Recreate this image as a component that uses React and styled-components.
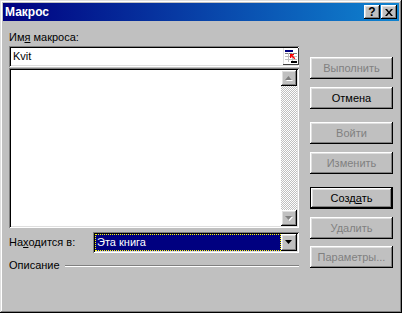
import React from 'react'
import styled, { createGlobalStyle, css } from 'styled-components'

const GlobalStyle = createGlobalStyle`
  html, body {
    margin: 0;
    padding: 0;
    background: #c0c0c0;
  }
  body {
    font-family: "Liberation Sans", Arial, sans-serif;
    font-size: 11px;
    color: #000;
  }
`

const raised = css`
  background: #c0c0c0;
  box-shadow: inset -1px -1px #000, inset 1px 1px #fff, inset -2px -2px #808080, inset 2px 2px #dfdfdf;
`

const sunken = css`
  box-shadow: inset 1px 1px #808080, inset -1px -1px #fff, inset 2px 2px #000, inset -2px -2px #dfdfdf;
`

const Window = styled.div`
  width: 402px;
  height: 313px;
  box-sizing: border-box;
  padding: 3px;
  background: #c0c0c0;
  box-shadow: inset -1px -1px #000, inset 1px 1px #dfdfdf, inset -2px -2px #808080, inset 2px 2px #fff;
  display: flex;
  flex-direction: column;
`

const TitleBar = styled.div`
  height: 18px;
  display: flex;
  align-items: center;
  padding: 0 2px 0 2px;
  background: linear-gradient(90deg, #000080, #1084d0);
`

const Title = styled.div`
  flex: 1;
  color: #fff;
  font-weight: bold;
  font-size: 12px;
  line-height: 18px;
`

const TitleButton = styled.div`
  ${raised};
  width: 16px;
  height: 14px;
  margin-left: ${(p) => p.$gap || 0}px;
  display: flex;
  align-items: center;
  justify-content: center;
  font-weight: bold;
  font-size: 12px;
  line-height: 14px;
`

const Body = styled.div`
  display: flex;
  gap: 11px;
  padding: 10px 0 0 6px;
`

const LeftCol = styled.div`
  width: 290px;
  display: flex;
  flex-direction: column;
`

const RightCol = styled.div`
  width: 83px;
  padding-top: 26px;
  display: flex;
  flex-direction: column;
`

const Label = styled.div`
  height: 13px;
  line-height: 13px;
  margin-bottom: 2px;
  white-space: nowrap;
  width: ${(p) => (p.$width ? `${p.$width}px` : 'auto')};
  flex-shrink: 0;
`

const TextField = styled.div`
  ${sunken};
  height: 21px;
  box-sizing: border-box;
  background: #fff;
  padding: 2px 2px 2px 4px;
  display: flex;
  align-items: center;
  margin-bottom: 1px;
`

const FieldText = styled.span`
  flex: 1;
  line-height: 17px;
`

const ListBox = styled.div`
  ${sunken};
  height: 160px;
  box-sizing: border-box;
  background: #fff;
  padding: 2px;
  display: flex;
  justify-content: flex-end;
`

const ScrollBar = styled.div`
  width: 16px;
  display: flex;
  flex-direction: column;
`

const ArrowButton = styled.div`
  ${raised};
  width: 16px;
  height: ${(p) => p.$h || 16}px;
  flex-shrink: 0;
  display: flex;
  align-items: center;
  justify-content: center;
`

const Track = styled.div`
  flex: 1;
  background-image: conic-gradient(#fff 25%, #c0c0c0 0 50%, #fff 0 75%, #c0c0c0 0);
  background-size: 2px 2px;
`

const ComboRow = styled.div`
  display: flex;
  align-items: center;
  margin-top: 4px;

  & > ${Label} {
    margin-bottom: 0;
  }
`

const Combo = styled.div`
  ${sunken};
  width: 206px;
  height: 21px;
  box-sizing: border-box;
  background: #fff;
  padding: 2px;
  display: flex;
`

const Selected = styled.div`
  flex: 1;
  background: #000080;
  color: #fff;
  padding-left: 2px;
  line-height: 17px;
  outline: 1px dotted #ffff00;
  outline-offset: -1px;
`

const GroupRow = styled.div`
  display: flex;
  align-items: center;
  gap: 5px;
  margin-top: 6px;
  height: 13px;
  line-height: 13px;
`

const Etched = styled.div`
  flex: 1;
  height: 0;
  border-top: 1px solid #808080;
  border-bottom: 1px solid #fff;
`

const Button = styled.div`
  ${raised};
  height: 22px;
  flex-shrink: 0;
  margin-bottom: ${(p) => p.$gap || 0}px;
  display: flex;
  align-items: center;
  justify-content: center;
  color: ${(p) => (p.$disabled ? '#808080' : '#000')};
  ${(p) =>
    p.$default &&
    css`
      box-shadow: inset 0 0 0 1px #000, inset -2px -2px #000, inset 2px 2px #fff, inset -3px -3px #808080,
        inset 3px 3px #dfdfdf;
    `}
`

const CloseIcon = () => (
  <svg width="8" height="7" viewBox="0 0 8 7">
    <path d="M0 0h2l2 2.5L6 0h2L5 3.5 8 7H6L4 4.5 2 7H0l3-3.5z" fill="#000" />
  </svg>
)

const Arrow = ({ up, disabled }) => {
  const pts = up ? '0,4 3.5,0 7,4' : '0,0 7,0 3.5,4'
  return (
    <svg width="8" height="5" viewBox="0 0 8 5">
      {disabled && <polygon points={pts} fill="#fff" transform="translate(1,1)" />}
      <polygon points={pts} fill={disabled ? '#808080' : '#000'} />
    </svg>
  )
}

const RefIcon = () => (
  <svg width="16" height="17" viewBox="0 0 16 17" style={{ flexShrink: 0, marginRight: '-2px' }}>
    <rect x="0" y="0" width="16" height="17" fill="#fff" />
    <rect x="0" y="0" width="1" height="17" fill="#dfdfdf" />
    <rect x="15" y="0" width="1" height="17" fill="#404040" />
    <rect x="0" y="16" width="16" height="1" fill="#404040" />
    <rect x="2" y="2" width="8" height="2" fill="#000080" />
    <rect x="2" y="5" width="12" height="1" fill="#808080" />
    <rect x="2" y="8" width="12" height="1" fill="#c0c0c0" />
    <rect x="2" y="11" width="12" height="1" fill="#c0c0c0" />
    <rect x="5" y="5" width="1" height="9" fill="#c0c0c0" />
    <rect x="9" y="5" width="1" height="9" fill="#c0c0c0" />
    <rect x="8" y="13" width="6" height="2" fill="#000" />
    <path d="M7 6h4v1.3H9.3l3 3-1 1-3-3V10H7z" fill="#ff0000" />
  </svg>
)

function App() {
  return (
    <>
      <GlobalStyle />
      <Window>
        <TitleBar>
          <Title>Макрос</Title>
          <TitleButton>?</TitleButton>
          <TitleButton $gap={1}>
            <CloseIcon />
          </TitleButton>
        </TitleBar>
        <Body>
          <LeftCol>
            <Label>
              Им<u>я</u> макроса:
            </Label>
            <TextField>
              <FieldText>Kvit</FieldText>
              <RefIcon />
            </TextField>
            <ListBox>
              <ScrollBar>
                <ArrowButton>
                  <Arrow up disabled />
                </ArrowButton>
                <Track />
                <ArrowButton>
                  <Arrow disabled />
                </ArrowButton>
              </ScrollBar>
            </ListBox>
            <ComboRow>
              <Label $width={84}>
                На<u>х</u>одится в:
              </Label>
              <Combo>
                <Selected>Эта книга</Selected>
                <ArrowButton $h={17}>
                  <Arrow />
                </ArrowButton>
              </Combo>
            </ComboRow>
            <GroupRow>
              <span>Описание</span>
              <Etched />
            </GroupRow>
          </LeftCol>
          <RightCol>
            <Button $disabled $gap={8}>Выполнить</Button>
            <Button $gap={13}>Отмена</Button>
            <Button $disabled $gap={8}>Войти</Button>
            <Button $disabled $gap={13}>Изменить</Button>
            <Button $default $gap={8}>
              Созд<u>а</u>ть
            </Button>
            <Button $disabled $gap={7}>Удалить</Button>
            <Button $disabled>Параметры...</Button>
          </RightCol>
        </Body>
      </Window>
    </>
  )
}

export default App
